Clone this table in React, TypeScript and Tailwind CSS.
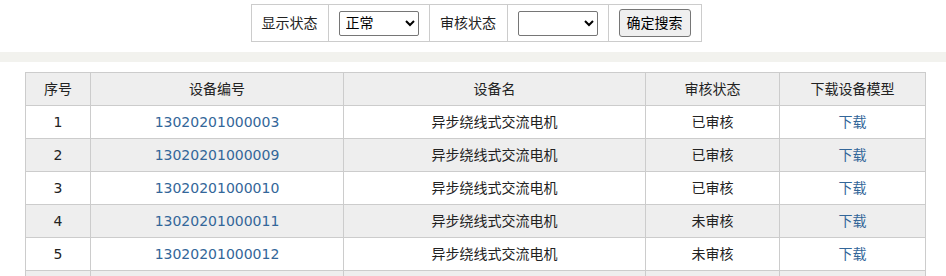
import React from "react"

const FONT = { fontFamily: '"DejaVu Sans", "Noto Sans CJK SC", sans-serif' }

const ROWS = [
  { no: 1, code: "13020201000003", name: "异步绕线式交流电机", status: "已审核" },
  { no: 2, code: "13020201000009", name: "异步绕线式交流电机", status: "已审核" },
  { no: 3, code: "13020201000010", name: "异步绕线式交流电机", status: "已审核" },
  { no: 4, code: "13020201000011", name: "异步绕线式交流电机", status: "未审核" },
  { no: 5, code: "13020201000012", name: "异步绕线式交流电机", status: "未审核" },
]

export default function App() {
  return (
    <div className="w-[946px] h-[276px] overflow-hidden bg-white text-[14px] text-[#222]" style={FONT}>
      {/* 搜索条件 */}
      <div className="flex justify-center pt-[4px] pl-[6px]">
        <table className="border-collapse">
          <tbody>
            <tr className="h-[37px]">
              <td className="border border-[#cccccc] w-[77px] text-center">显示状态</td>
              <td className="border border-[#cccccc] w-[101px] px-[10px]">
                <select
                  defaultValue="正常"
                  className="w-[80px] h-[25px] border border-[#767676] rounded-[2px] bg-white text-[14px] text-black pl-[2px]"
                  style={FONT}
                >
                  <option>正常</option>
                  <option>删除</option>
                </select>
              </td>
              <td className="border border-[#cccccc] w-[78px] text-center">审核状态</td>
              <td className="border border-[#cccccc] w-[99px] px-[10px]">
                <select
                  defaultValue=""
                  className="w-[80px] h-[25px] border border-[#767676] rounded-[2px] bg-white text-[14px] text-black"
                  style={FONT}
                >
                  <option value=""></option>
                  <option>已审核</option>
                  <option>未审核</option>
                </select>
              </td>
              <td className="border border-[#cccccc] w-[93px] px-[10px]">
                <button
                  className="h-[28px] w-[72px] border border-[#767676] rounded-[3px] bg-[#efefef] text-[14px] text-black"
                  style={FONT}
                >
                  确定搜索
                </button>
              </td>
            </tr>
          </tbody>
        </table>
      </div>

      {/* 分隔条 */}
      <div className="mt-[10px] h-[10px] bg-[#f2f2ee]" />

      {/* 设备列表 */}
      <div className="pt-[10px] pl-[25px]">
        <table className="border-collapse w-[900px] table-fixed">
          <colgroup>
            <col className="w-[65px]" />
            <col className="w-[253px]" />
            <col className="w-[302px]" />
            <col className="w-[134px]" />
            <col className="w-[146px]" />
          </colgroup>
          <thead>
            <tr className="h-[33px] bg-[#eeeeee]">
              <th className="border border-[#cccccc] font-normal">序号</th>
              <th className="border border-[#cccccc] font-normal">设备编号</th>
              <th className="border border-[#cccccc] font-normal">设备名</th>
              <th className="border border-[#cccccc] font-normal">审核状态</th>
              <th className="border border-[#cccccc] font-normal">下载设备模型</th>
            </tr>
          </thead>
          <tbody>
            {ROWS.map((r, i) => (
              <tr key={r.no} className={i % 2 === 1 ? "h-[33px] bg-[#eeeeee]" : "h-[33px] bg-white"}>
                <td className="border border-[#cccccc] text-center">{r.no}</td>
                <td className="border border-[#cccccc] text-center">
                  <a className="text-[#336699]">{r.code}</a>
                </td>
                <td className="border border-[#cccccc] text-center">{r.name}</td>
                <td className="border border-[#cccccc] text-center">{r.status}</td>
                <td className="border border-[#cccccc] text-center">
                  <a className="text-[#336699]">下载</a>
                </td>
              </tr>
            ))}
            {/* 下一行，只露出顶部 */}
            <tr className="h-[33px] bg-[#eeeeee]">
              <td className="border border-[#cccccc]" />
              <td className="border border-[#cccccc]" />
              <td className="border border-[#cccccc]" />
              <td className="border border-[#cccccc]" />
              <td className="border border-[#cccccc]" />
            </tr>
          </tbody>
        </table>
      </div>
    </div>
  )
}
